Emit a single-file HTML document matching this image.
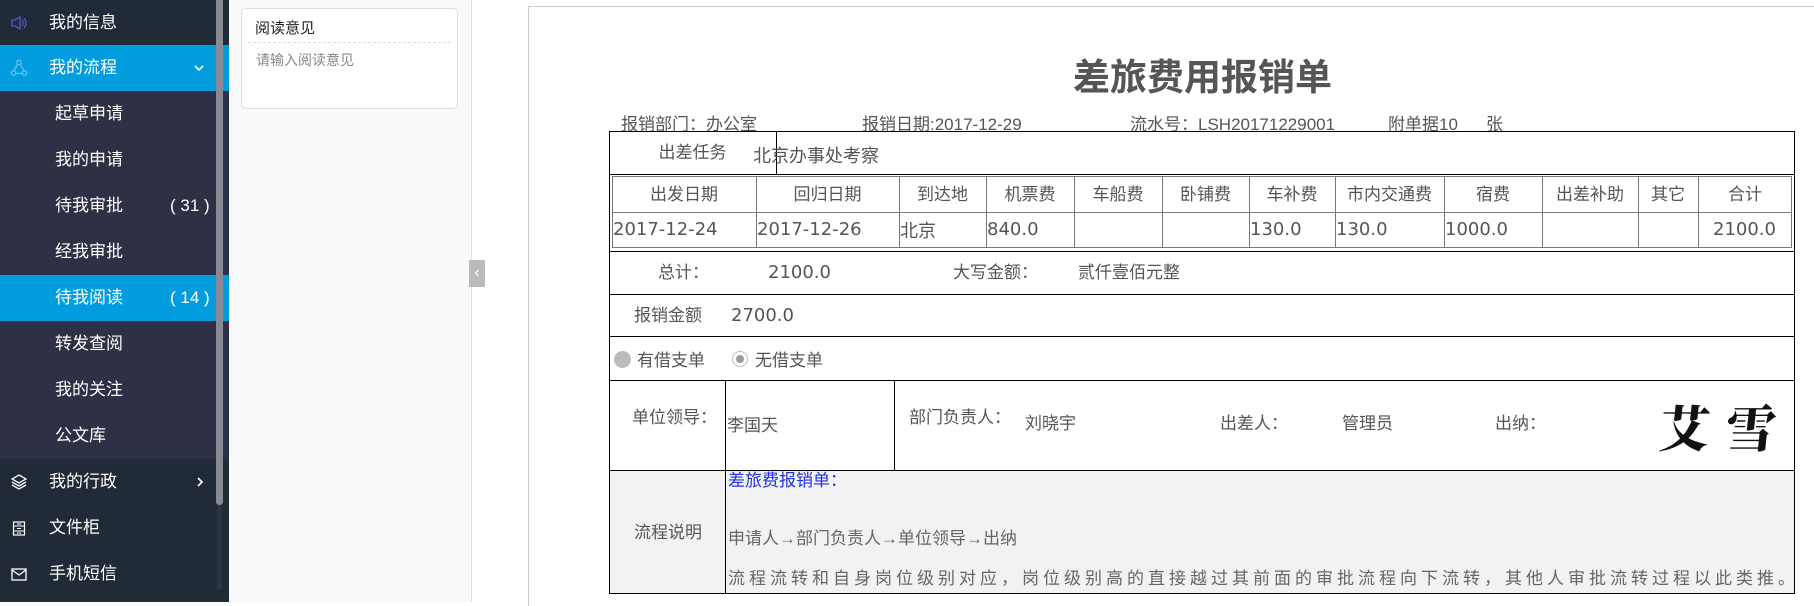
<!DOCTYPE html>
<html><head><meta charset="utf-8">
<style>
*{margin:0;padding:0;box-sizing:border-box}
body{width:1814px;height:602px;overflow:hidden;background:#fff;font-family:"Liberation Sans","Noto Sans CJK SC",sans-serif;position:relative}
.a{position:absolute;white-space:nowrap}
#side{position:absolute;left:0;top:0;width:229px;height:602px;background:#212a37}
.mi{position:absolute;left:0;width:229px;height:46px;color:#fff;font-size:17px;line-height:46px}
.mi .t{position:absolute;left:49px}
.sub{position:absolute;left:0;top:91px;width:229px;height:368px;background:#2e3145}
.si{position:absolute;left:0;width:229px;height:46px;color:#fff;font-size:17px;line-height:46px}
.si .t{position:absolute;left:55px}
.si .n{position:absolute;left:170px}
.act{background:#029ddf}
.g{color:#555;font-size:17px}
.h{position:absolute;background:#000;height:1px}
.v{position:absolute;background:#000;width:1px}
.ih{position:absolute;background:#777;height:1px}
.iv{position:absolute;background:#777;width:1px}
.c{position:absolute;text-align:center;color:#555;font-size:17px;line-height:30px;white-space:nowrap}
.d{position:absolute;color:#555;font-size:18px;line-height:30px;font-family:"DejaVu Sans","Noto Sans CJK SC",sans-serif;white-space:nowrap;padding-left:1px}
</style></head><body>
<div id="side">
 <div class="mi" style="top:0"><svg class="a" style="left:10px;top:15px" width="18" height="16" viewBox="0 0 18 16"><path d="M2 5h3l5-3v12l-5-3H2z" fill="none" stroke="#5b57c7" stroke-width="1.3"/><path d="M12 5c1.5 1.5 1.5 4.5 0 6M14 3c2.5 2.5 2.5 7.5 0 10" fill="none" stroke="#5b57c7" stroke-width="1.2"/></svg><span class="t">我的信息</span></div>
 <div class="mi act" style="top:45px"><svg class="a" style="left:10px;top:14px" width="18" height="18" viewBox="0 0 18 18"><path d="M9 2.5L15.5 14.5H2.5z" fill="none" stroke="#5fc4ee" stroke-width="1.3"/><circle cx="9" cy="3.5" r="2.2" fill="#029ddf" stroke="#5fc4ee" stroke-width="1.3"/><circle cx="3.5" cy="14" r="2.2" fill="#029ddf" stroke="#5fc4ee" stroke-width="1.3"/><circle cx="14.5" cy="14" r="2.2" fill="#029ddf" stroke="#5fc4ee" stroke-width="1.3"/></svg><span class="t">我的流程</span><svg class="a" style="left:194px;top:20px" width="10" height="7" viewBox="0 0 10 7"><path d="M1 1l4 4 4-4" fill="none" stroke="#fff" stroke-width="1.6"/></svg></div>
 <div class="sub">
  <div class="si" style="top:0"><span class="t">起草申请</span></div>
  <div class="si" style="top:46px"><span class="t">我的申请</span></div>
  <div class="si" style="top:92px"><span class="t">待我审批</span><span class="n">( 31 )</span></div>
  <div class="si" style="top:138px"><span class="t">经我审批</span></div>
  <div class="si act" style="top:184px"><span class="t">待我阅读</span><span class="n">( 14 )</span></div>
  <div class="si" style="top:230px"><span class="t">转发查阅</span></div>
  <div class="si" style="top:276px"><span class="t">我的关注</span></div>
  <div class="si" style="top:322px"><span class="t">公文库</span></div>
 </div>
 <div class="mi" style="top:459px"><svg class="a" style="left:11px;top:15px" width="16" height="16" viewBox="0 0 16 16"><path d="M8 1L15 5 8 9 1 5z" fill="none" stroke="#fff" stroke-width="1.3"/><path d="M1 8l7 4 7-4M1 11l7 4 7-4" fill="none" stroke="#fff" stroke-width="1.3"/></svg><span class="t">我的行政</span><svg class="a" style="left:197px;top:18px" width="7" height="10" viewBox="0 0 7 10"><path d="M1 1l4 4-4 4" fill="none" stroke="#fff" stroke-width="1.6"/></svg></div>
 <div class="mi" style="top:505px"><svg class="a" style="left:12px;top:16px" width="14" height="15" viewBox="0 0 14 15"><rect x="1.5" y="1" width="11" height="13" fill="none" stroke="#fff" stroke-width="1.2"/><path d="M1.5 5h11M1.5 10h11M5 3h4M5 7.5h4M5 12h4" stroke="#fff" stroke-width="1"/></svg><span class="t">文件柜</span></div>
 <div class="mi" style="top:551px"><svg class="a" style="left:11px;top:17px" width="16" height="13" viewBox="0 0 16 13"><rect x="1" y="1" width="14" height="11" fill="none" stroke="#fff" stroke-width="1.3"/><path d="M1 2l7 5 7-5" fill="none" stroke="#fff" stroke-width="1.3"/></svg><span class="t">手机短信</span></div>
 <div class="a" style="left:216px;top:0;width:7px;height:505px;background:#888a93;border-radius:0 0 3px 3px"></div>
 <div class="a" style="left:217px;top:505px;width:5px;height:85px;background:#2d3442;border-radius:3px"></div>
</div>
<div class="a" style="left:229px;top:0;width:243px;height:602px;background:#f9f9f9;border-right:1px solid #ddd"></div>
<div class="a" style="left:241px;top:8px;width:217px;height:101px;background:#fff;border:1px solid #ddd;border-radius:5px"></div>
<div class="a" style="left:255px;top:17px;font-size:15px;color:#222">阅读意见</div>
<div class="a" style="left:248px;top:42px;width:203px;border-top:1px dashed #ddd"></div>
<div class="a" style="left:256px;top:50px;font-size:14px;color:#888">请输入阅读意见</div>
<div class="a" style="left:469px;top:260px;width:16px;height:27px;background:#bbb;color:#fff;font-size:16px;line-height:26px;text-align:center">&lsaquo;</div>

<div class="a" style="left:528px;top:6px;width:1300px;height:600px;border-left:1px solid #ccc;border-top:1px solid #ccc"></div>
<div class="a" style="left:1073px;top:47px;font-size:37px;font-weight:bold;color:#555">差旅费用报销单</div>
<div class="a g" style="left:621px;top:110px">报销部门：办公室</div>
<div class="a g" style="left:862px;top:110px">报销日期:2017-12-29</div>
<div class="a g" style="left:1130px;top:110px">流水号：LSH20171229001</div>
<div class="a g" style="left:1388px;top:110px">附单据10</div>
<div class="a g" style="left:1486px;top:110px">张</div>

<div class="a" style="left:609px;top:131px;width:1186px;height:463px;border:1.5px solid #000"></div>
<div class="h" style="left:609px;top:174px;width:1186px"></div>
<div class="h" style="left:609px;top:251px;width:1186px"></div>
<div class="h" style="left:609px;top:294px;width:1186px"></div>
<div class="h" style="left:609px;top:336px;width:1186px"></div>
<div class="h" style="left:609px;top:380px;width:1186px"></div>
<div class="h" style="left:609px;top:470px;width:1186px"></div>
<div class="v" style="left:776px;top:131px;height:43px"></div>
<div class="a" style="left:610px;top:471px;width:1184px;height:122px;background:#f2f2f2"></div>
<div class="v" style="left:725px;top:380px;height:214px"></div>
<div class="v" style="left:894px;top:380px;height:90px"></div>

<div class="c" style="left:609px;top:138px;width:167px">出差任务</div>
<div class="a g" style="left:753px;top:142px;font-size:18px">北京办事处考察</div>

<div class="a" style="left:612px;top:176px;width:1180px;height:72px;border:1px solid #777"></div>
<div class="ih" style="left:612px;top:212px;width:1180px"></div>
<div class="iv" style="left:756px;top:176px;height:72px"></div>
<div class="iv" style="left:899px;top:176px;height:72px"></div>
<div class="iv" style="left:986px;top:176px;height:72px"></div>
<div class="iv" style="left:1074px;top:176px;height:72px"></div>
<div class="iv" style="left:1162px;top:176px;height:72px"></div>
<div class="iv" style="left:1249px;top:176px;height:72px"></div>
<div class="iv" style="left:1335px;top:176px;height:72px"></div>
<div class="iv" style="left:1444px;top:176px;height:72px"></div>
<div class="iv" style="left:1542px;top:176px;height:72px"></div>
<div class="iv" style="left:1638px;top:176px;height:72px"></div>
<div class="iv" style="left:1698px;top:176px;height:72px"></div>
<div class="c" style="left:612px;top:180px;width:144px">出发日期</div>
<div class="c" style="left:756px;top:180px;width:143px">回归日期</div>
<div class="c" style="left:899px;top:180px;width:87px">到达地</div>
<div class="c" style="left:986px;top:180px;width:88px">机票费</div>
<div class="c" style="left:1074px;top:180px;width:88px">车船费</div>
<div class="c" style="left:1162px;top:180px;width:87px">卧铺费</div>
<div class="c" style="left:1249px;top:180px;width:86px">车补费</div>
<div class="c" style="left:1335px;top:180px;width:109px">市内交通费</div>
<div class="c" style="left:1444px;top:180px;width:98px">宿费</div>
<div class="c" style="left:1542px;top:180px;width:96px">出差补助</div>
<div class="c" style="left:1638px;top:180px;width:60px">其它</div>
<div class="c" style="left:1698px;top:180px;width:94px">合计</div>
<div class="d" style="left:612px;top:215px">2017-12-24</div>
<div class="d" style="left:756px;top:215px">2017-12-26</div>
<div class="c" style="left:900px;top:216px;font-size:18px">北京</div>
<div class="d" style="left:986px;top:215px">840.0</div>
<div class="d" style="left:1249px;top:215px">130.0</div>
<div class="d" style="left:1335px;top:215px">130.0</div>
<div class="d" style="left:1444px;top:215px">1000.0</div>
<div class="d" style="left:1712px;top:215px">2100.0</div>

<div class="c" style="left:658px;top:258px">总计：</div>
<div class="d" style="left:767px;top:258px">2100.0</div>
<div class="c" style="left:953px;top:258px">大写金额：</div>
<div class="c" style="left:1078px;top:258px">贰仟壹佰元整</div>

<div class="c" style="left:634px;top:301px">报销金额</div>
<div class="d" style="left:730px;top:301px">2700.0</div>

<div class="a" style="left:614px;top:351px;width:17px;height:17px;border-radius:50%;background:#bbb"></div>
<div class="c" style="left:637px;top:346px">有借支单</div>
<div class="a" style="left:732px;top:351px;width:16px;height:16px;border-radius:50%;background:#fff;border:1px solid #bbb"></div>
<div class="a" style="left:736px;top:355px;width:8px;height:8px;border-radius:50%;background:#999"></div>
<div class="c" style="left:755px;top:346px">无借支单</div>

<div class="c" style="left:632px;top:403px">单位领导：</div>
<div class="c" style="left:727px;top:411px">李国天</div>
<div class="c" style="left:909px;top:403px">部门负责人：</div>
<div class="c" style="left:1025px;top:409px">刘晓宇</div>
<div class="c" style="left:1220px;top:409px">出差人：</div>
<div class="c" style="left:1342px;top:409px">管理员</div>
<div class="c" style="left:1495px;top:409px">出纳：</div>
<div class="a" style="left:1660px;top:396px;font-size:50px;line-height:60px;color:#111;font-family:'Noto Serif CJK SC',serif;font-weight:900;letter-spacing:16px;transform:skewX(-6deg)">艾雪</div>

<div class="c" style="left:634px;top:518px">流程说明</div>
<div class="a" style="left:728px;top:469px;font-size:17px;color:#2233dd;line-height:24px">差旅费报销单：</div>
<div class="a" style="left:728px;top:527px;font-size:17px;color:#666;line-height:24px">申请人→部门负责人→单位领导→出纳</div>
<div class="a" style="left:728px;top:567px;font-size:17px;letter-spacing:4px;color:#666;line-height:24px">流程流转和自身岗位级别对应，岗位级别高的直接越过其前面的审批流程向下流转，其他人审批流转过程以此类推。</div>
</body></html>
